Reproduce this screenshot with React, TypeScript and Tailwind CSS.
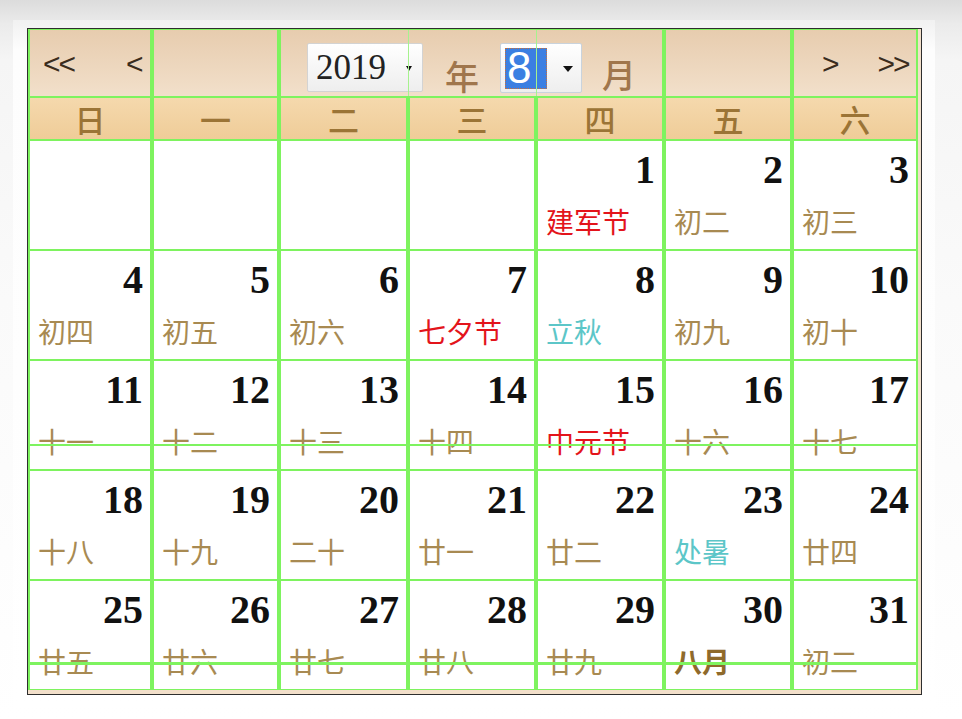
import React from 'react'

type Kind = 'lunar' | 'holiday' | 'term' | 'month'

interface Day {
  day: number
  label: string
  kind: Kind
}

const labels: [string, Kind][] = [
  ['建军节', 'holiday'], ['初二', 'lunar'], ['初三', 'lunar'], ['初四', 'lunar'], ['初五', 'lunar'],
  ['初六', 'lunar'], ['七夕节', 'holiday'], ['立秋', 'term'], ['初九', 'lunar'], ['初十', 'lunar'],
  ['十一', 'lunar'], ['十二', 'lunar'], ['十三', 'lunar'], ['十四', 'lunar'], ['中元节', 'holiday'],
  ['十六', 'lunar'], ['十七', 'lunar'], ['十八', 'lunar'], ['十九', 'lunar'], ['二十', 'lunar'],
  ['廿一', 'lunar'], ['廿二', 'lunar'], ['处暑', 'term'], ['廿四', 'lunar'], ['廿五', 'lunar'],
  ['廿六', 'lunar'], ['廿七', 'lunar'], ['廿八', 'lunar'], ['廿九', 'lunar'], ['八月', 'month'],
  ['初二', 'lunar'],
]

const days: Day[] = labels.map(([label, kind], i) => ({ day: i + 1, label, kind }))

// August 2019 starts on a Thursday
const cells: (Day | null)[] = [null, null, null, null, ...days]
const rows: (Day | null)[][] = []
for (let i = 0; i < cells.length; i += 7) rows.push(cells.slice(i, i + 7))

const weekdays = ['日', '一', '二', '三', '四', '五', '六']

const kindColor: Record<Kind, string> = {
  lunar: 'text-[#a88a52]',
  holiday: 'text-[#e3141b]',
  term: 'text-[#5cc6c8]',
  month: 'text-[#8f6a2b] font-bold',
}

const gridCols = 'grid grid-cols-[124px_127px_129px_128px_128px_128px_126px]'

function DayCell({ cell, rule }: { cell: Day | null; rule?: number }) {
  return (
    <div className="relative flex flex-col bg-white border-x-2 border-y border-[#7ef35f] pt-[9px]">
      {cell && (
        <>
          <div className="h-[40px] pr-[7px] text-right text-[40px] leading-[40px] font-bold text-[#111] font-['Liberation_Serif','Times_New_Roman',serif]">
            {cell.day}
          </div>
          <div
            className={`mt-[17px] pl-[8px] text-[28px] leading-[28px] whitespace-nowrap font-['Noto_Sans_CJK_SC',sans-serif] ${kindColor[cell.kind]}`}
          >
            {cell.label}
          </div>
        </>
      )}
      {rule === 84 && <div className="absolute -left-[2px] -right-[2px] top-[83px] h-[2px] bg-[#7ef35f]" />}
      {rule === 82 && <div className="absolute -left-[2px] -right-[2px] top-[81px] h-[3px] bg-[#7ef35f]" />}
    </div>
  )
}

function NavRow() {
  const cell = 'border-x-2 border-y border-[#7ef35f] flex items-center'
  return (
    <div className={`${gridCols} h-[68px] bg-gradient-to-b from-[#e7ccae] to-[#f2e0cb] text-[#3a2c1d] font-['Liberation_Sans',Arial,sans-serif]`}>
      <div className={`${cell} pl-[13px] pt-[2px]`}>
        <span className="text-[30px] tracking-[-2px] leading-none">&lt;&lt;</span>
        <span className="ml-[52px] text-[30px] leading-none">&lt;</span>
      </div>
      <div className={cell} />
      <div className="relative col-span-3 border-x-2 border-y border-[#7ef35f] flex items-start justify-center font-['Noto_Sans_CJK_SC',sans-serif]">
        {/* year select */}
        <div className="mt-[13px] w-[116px] h-[49px] flex items-center border border-[#d3d3d3] rounded-[2px] bg-gradient-to-b from-white to-[#eeeeee]">
          <span className="pl-[8px] text-[35px] leading-none text-[#222] font-['Liberation_Serif',serif]">2019</span>
          <span className="ml-auto mr-[10px] mt-[2px] w-0 h-0 border-l-[3px] border-r-[3px] border-t-[5px] border-l-transparent border-r-transparent border-t-[#111]" />
        </div>
        <span className="ml-[22px] mt-[29px] text-[34px] leading-[34px] font-medium text-[#a0764c]">年</span>
        {/* month select */}
        <div className="ml-[21px] mt-[13px] w-[82px] h-[50px] flex items-center border border-[#c9d3dd] rounded-[2px] bg-gradient-to-b from-white to-[#eeeeee]">
          <div className="ml-[4px] w-[42px] h-[41px] bg-[#3b7fe2] border border-dotted border-[#c8703a] flex items-center">
            <span className="pl-[1px] text-[44px] leading-none text-white font-['Liberation_Sans',Arial,sans-serif]">8</span>
          </div>
          <span className="ml-auto mr-[8px] mt-[2px] w-0 h-0 border-l-[5px] border-r-[5px] border-t-[6px] border-l-transparent border-r-transparent border-t-[#111]" />
        </div>
        <span className="ml-[20px] mt-[27px] text-[34px] leading-[34px] font-medium text-[#a0764c]">月</span>
        {/* cell edges drawn over the controls */}
        <div className="absolute top-0 bottom-0 left-[127px] w-px bg-[#a6f28e]" />
        <div className="absolute top-0 bottom-0 left-[255px] w-px bg-[#a6f28e]" />
      </div>
      <div className={cell} />
      <div className={`${cell} pl-[28px] pt-[2px]`}>
        <span className="text-[30px] leading-none">&gt;</span>
        <span className="ml-[38px] text-[30px] tracking-[-2px] leading-none">&gt;&gt;</span>
      </div>
    </div>
  )
}

export default function App() {
  return (
    <div className="w-[962px] h-[719px] overflow-hidden bg-[linear-gradient(to_bottom,#dcdcdc_0px,#ebebeb_24px,#f5f5f5_60px,#fafafa_300px,#ffffff_719px)]">
      <div className="ml-[13px] mt-[20px] w-[922px] h-[687px] bg-[linear-gradient(to_bottom,#f1f1f1_0px,#fdfdfd_30px,#ffffff_100%)] pl-[14px] pt-[8px]">
        <div className="w-[895px] border border-[#2e2e2e] bg-[#f2dfca] pr-[3px] pb-[4px]">
          <NavRow />
          <div className={`${gridCols} h-[43px] bg-gradient-to-b from-[#f5d9ad] to-[#efcc98]`}>
            {weekdays.map(w => (
              <div
                key={w}
                className="border-x-2 border-y border-[#7ef35f] text-center text-[31px] leading-[41px] font-medium text-[#9b7436] font-['Noto_Sans_CJK_SC',sans-serif]"
              >
                {w}
              </div>
            ))}
          </div>
          {rows.map((row, r) => (
            <div key={r} className={`${gridCols} h-[110px]`}>
              {row.map((cell, c) => (
                <DayCell key={c} cell={cell} rule={r === 2 ? 84 : r === 4 ? 82 : undefined} />
              ))}
            </div>
          ))}
        </div>
      </div>
    </div>
  )
}
